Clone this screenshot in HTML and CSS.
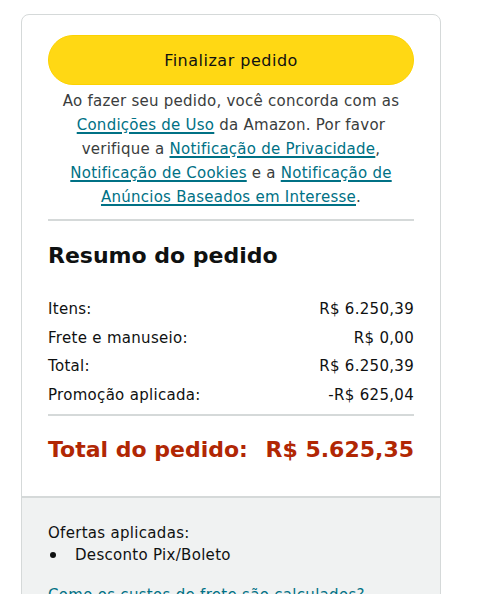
FILE: index.html
```html
<!DOCTYPE html>
<html lang="pt-BR">
<head>
<meta charset="utf-8">
<link rel="stylesheet" href="styles.css">
</head>
<body>
<div class="card">
  <div class="main">
    <button class="btn">Finalizar pedido</button>
    <p class="legal">Ao fazer seu pedido, você concorda com as<br><a href="#">Condições de Uso</a> da Amazon. Por favor<br>verifique a <a href="#">Notificação de Privacidade</a>,<br><a href="#">Notificação de Cookies</a> e a <a href="#">Notificação de</a><br><a href="#">Anúncios Baseados em Interesse</a>.</p>
    <hr class="div">
    <h2 class="title">Resumo do pedido</h2>
    <div class="rows">
      <div class="row"><span>Itens:</span><span>R$ 6.250,39</span></div>
      <div class="row"><span>Frete e manuseio:</span><span>R$ 0,00</span></div>
      <div class="row"><span>Total:</span><span>R$ 6.250,39</span></div>
      <div class="row"><span>Promoção aplicada:</span><span>-R$ 625,04</span></div>
    </div>
    <hr class="div">
    <div class="grand"><span>Total do pedido:</span><span>R$ 5.625,35</span></div>
  </div>
  <div class="foot">
    <div class="offers">Ofertas aplicadas:</div>
    <ul class="list"><li>Desconto Pix/Boleto</li></ul>
    <a class="flink" href="#">Como os custos de frete são calculados?</a>
  </div>
</div>
</body>
</html>
```
FILE: styles.css
```css
html, body { margin: 0; padding: 0; background: #fff; }
body {
  font-family: "DejaVu Sans", "Noto Sans", sans-serif;
  color: #0f1111;
  padding: 14px 0 0 21px;
}
.card {
  width: 418px;
  border: 1px solid #d5d9d9;
  border-radius: 8px;
  overflow: hidden;
}
.main { padding: 20px 26px 31px; }
.btn {
  display: block;
  width: 100%;
  height: 50px;
  border: 1px solid #fcd200;
  background: #ffd814;
  border-radius: 25px;
  font-family: inherit;
  font-size: 16px;
  letter-spacing: 0.5px;
  color: #0f1111;
  padding: 0;
}
.legal {
  margin: 4px 0 0;
  font-size: 15px;
  letter-spacing: 0.25px;
  line-height: 24px;
  text-align: center;
  color: #3a3d3d;
  white-space: nowrap;
}
.legal a { color: #007185; text-decoration: underline; text-decoration-thickness: 2px; text-underline-offset: 2px; }
.div { border: 0; border-top: 2px solid #d5d9d9; margin: 10px 0 0; }
.title { font-size: 22px; font-weight: 700; margin: 20px 0 0; line-height: 30px; }
.rows { margin-top: 24px; display: flex; flex-direction: column; }
.row { display: flex; justify-content: space-between; font-size: 15px; letter-spacing: 0.3px; line-height: 28.7px; color: #0f1111; }
.rows + .div { margin-top: 4px; }
.grand {
  display: flex; justify-content: space-between;
  font-size: 22px; font-weight: 700; color: #b12704;
  margin-top: 19px; line-height: 30px;
}
.foot {
  background: #f0f2f2;
  border-top: 2px solid #d5d9d9;
  padding: 24px 26px 20px;
  font-size: 15px;
  letter-spacing: 0.3px;
  line-height: 22px;
  height: 200px;
}
.list { margin: 0; padding: 0; list-style: none; }
.list li { display: flex; align-items: center; }
.list li::before {
  content: "";
  width: 6px; height: 6px; border-radius: 50%;
  background: #0f1111;
  margin: 0 19px 0 2px;
}
.flink { display: inline-block; margin-top: 18px; color: #007185; text-decoration: underline; }
```
